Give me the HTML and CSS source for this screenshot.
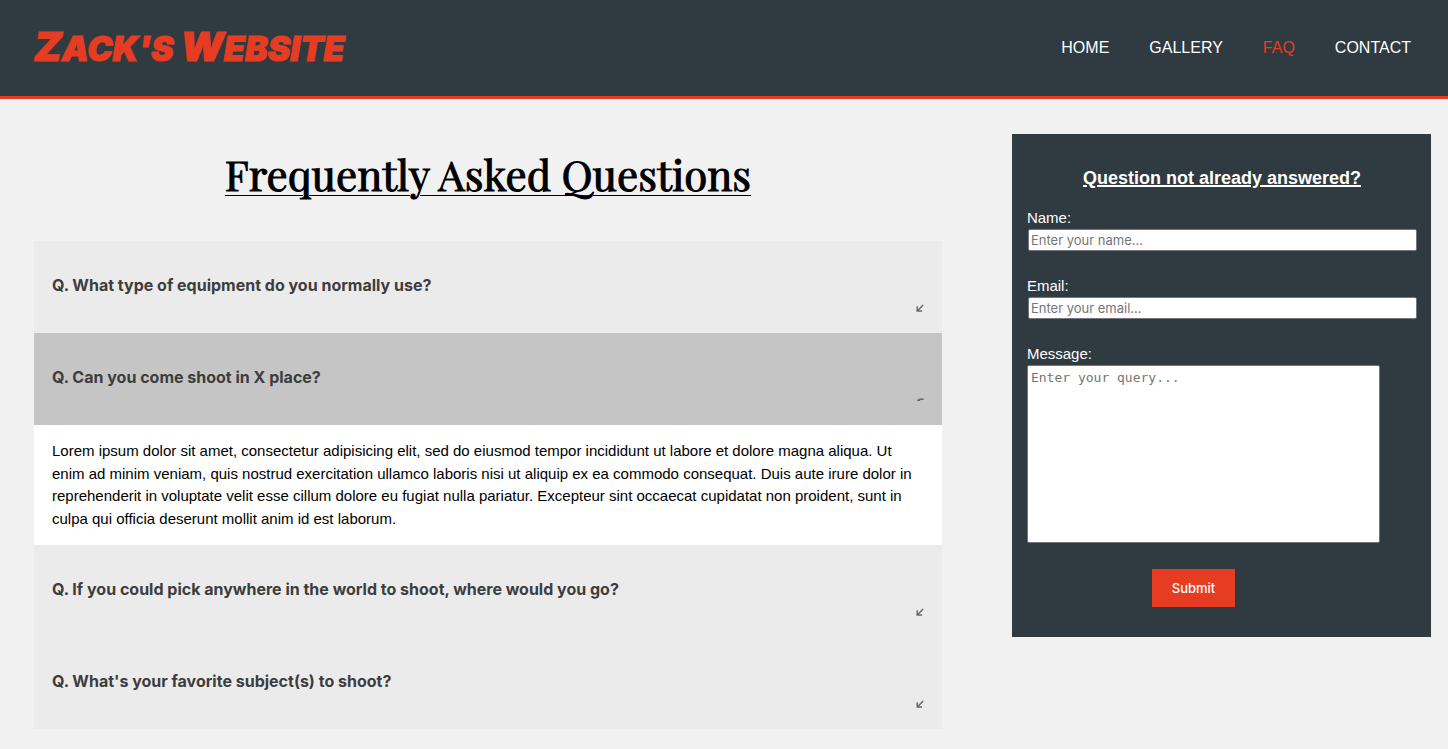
FILE: index.html
```html
<!DOCTYPE html>
<html lang="en">
<head>
<meta charset="utf-8">
<meta name="viewport" content="width=device-width, initial-scale=1">
<title>Zack's Website - FAQ</title>
<link rel="stylesheet" href="styles.css">
</head>
<body>
<header class="site-header">
  <a class="logo" href="#"><span class="logo-word">Zack's</span> <span class="logo-word">Website</span></a>
  <nav class="nav">
    <a href="#">HOME</a>
    <a href="#">GALLERY</a>
    <a class="current" href="#" aria-current="page">FAQ</a>
    <a href="#">CONTACT</a>
  </nav>
</header>
<main class="content">
  <section class="faq">
    <h1>Frequently Asked Questions</h1>
    <div class="accordion">
      <button class="question" type="button" aria-expanded="false">
        <span>Q. What type of equipment do you normally use?</span>
        <svg class="arrow" viewBox="0 0 8 20" aria-hidden="true"><path d="M7.2 8 1.4 13.8M1.2 9.2V14H6"/></svg>
      </button>
      <button class="question open" type="button" aria-expanded="true" aria-controls="answer-2">
        <span>Q. Can you come shoot in X place?</span>
        <svg class="arrow" viewBox="0 0 8 20" aria-hidden="true"><path d="M7.7 10.3H4L1.8 11.4M1.2 11.3H4.2"/></svg>
      </button>
      <div class="answer" id="answer-2">
        <p>Lorem ipsum dolor sit amet, consectetur adipisicing elit, sed do eiusmod tempor incididunt ut labore et dolore magna aliqua. Ut enim ad minim veniam, quis nostrud exercitation ullamco laboris nisi ut aliquip ex ea commodo consequat. Duis aute irure dolor in reprehenderit in voluptate velit esse cillum dolore eu fugiat nulla pariatur. Excepteur sint occaecat cupidatat non proident, sunt in culpa qui officia deserunt mollit anim id est laborum.</p>
      </div>
      <button class="question" type="button" aria-expanded="false">
        <span>Q. If you could pick anywhere in the world to shoot, where would you go?</span>
        <svg class="arrow" viewBox="0 0 8 20" aria-hidden="true"><path d="M7.2 8 1.4 13.8M1.2 9.2V14H6"/></svg>
      </button>
      <button class="question" type="button" aria-expanded="false">
        <span>Q. What's your favorite subject(s) to shoot?</span>
        <svg class="arrow" viewBox="0 0 8 20" aria-hidden="true"><path d="M7.2 8 1.4 13.8M1.2 9.2V14H6"/></svg>
      </button>
    </div>
  </section>
  <form class="ask">
    <h2>Question not already answered?</h2>
    <div class="field">
      <label for="name">Name:</label>
      <input id="name" type="text" placeholder="Enter your name...">
    </div>
    <div class="field">
      <label for="email">Email:</label>
      <input id="email" type="email" placeholder="Enter your email...">
    </div>
    <div class="field">
      <label for="message">Message:</label>
      <textarea id="message" placeholder="Enter your query..."></textarea>
    </div>
    <button class="submit" type="submit">Submit</button>
  </form>
</main>
</body>
</html>
```
FILE: styles.css
```css
* {
  box-sizing: border-box;
}

body {
  margin: 0;
  background: #f1f1f1;
  color: #000;
  font: 15px/1.5 "Liberation Sans", Arial, sans-serif;
}

.site-header {
  display: flex;
  align-items: center;
  justify-content: space-between;
  min-height: 99px;
  padding: 0 37px 0 34px;
  background: #303a41;
  border-bottom: 3px solid #e63d22;
}

.logo {
  color: #e63d22;
  font: italic 900 34px/60px "Permanent Marker", Inter, sans-serif;
  text-decoration: none;
  text-transform: uppercase;
  -webkit-text-stroke: 1px #e63d22;
}

.logo-word {
  display: inline-block;
}

.logo-word::first-letter {
  font-size: 40px;
}

.nav {
  display: flex;
  gap: 40px;
  font-size: 16px;
}

.nav a {
  color: #fff;
  text-decoration: none;
}

.nav .current {
  color: #e63d22;
}

.content {
  display: grid;
  grid-template-columns: 13fr 6fr;
  gap: 70px;
  align-items: start;
  padding: 35px 17px 20px 34px;
}

.faq h1 {
  margin: 10px 0 37px;
  font: 400 42px/60px "Playfair Display", "Liberation Serif", serif;
  text-align: center;
  text-decoration: underline 1px;
  text-underline-offset: 4px;
  -webkit-text-stroke: 1px #000;
}

.question {
  display: flex;
  flex-direction: column;
  width: 100%;
  padding: 32px 18px 16px;
  border: 0;
  background: #ebebeb;
  color: #3d3d3d;
  font: bold 16px/24px Inter, sans-serif;
  text-align: left;
  cursor: pointer;
}

.question.open {
  background: #c5c5c5;
}

.arrow {
  align-self: flex-end;
  width: 8px;
  height: 20px;
  fill: none;
  stroke: #666;
  stroke-width: 1.4;
}

.answer {
  padding: 15px 18px;
  background: #fff;
}

.answer p {
  margin: 0;
}

.ask {
  padding: 33px 14px 30px 15px;
  background: #303a41;
  color: #fff;
}

.ask h2 {
  margin: 0 0 16px;
  font-size: 18px;
  line-height: 23px;
  text-align: center;
  text-decoration: underline 2px;
}

.field {
  display: flex;
  flex-direction: column;
  margin-bottom: 23px;
}

.field label {
  line-height: 23px;
}

.field input,
.field textarea {
  border: 1px solid #767680;
  border-radius: 2px;
  background: #fff;
}

.field input {
  height: 22px;
  margin: 0 0 0 1px;
  padding: 1px 2px;
  font: 13px Inter, sans-serif;
}

.field textarea {
  width: 353px;
  max-width: 100%;
  height: 178px;
  margin: 0 0 3px;
  padding: 4px 3px;
  font: 13px/16px "DejaVu Sans Mono", monospace;
  resize: none;
}

.field ::placeholder {
  color: #757575;
}

.submit {
  display: block;
  height: 38px;
  margin-left: 32%;
  padding: 0 20px;
  border: 0;
  background: #e63d22;
  color: #fff;
  font: 500 13px Inter, sans-serif;
  cursor: pointer;
}
```
